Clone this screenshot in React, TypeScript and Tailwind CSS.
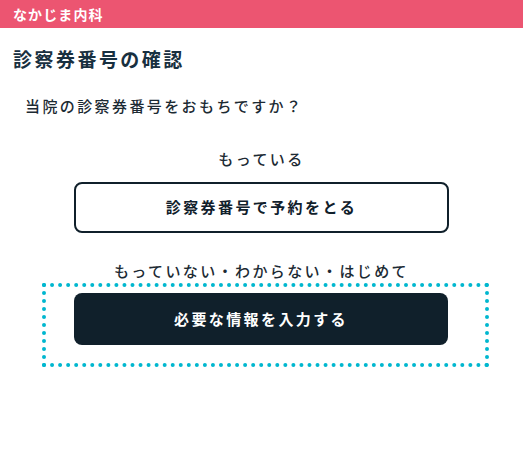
export default function App() {
  const font = { fontFamily: '"Noto Sans CJK JP", "Noto Sans", sans-serif' };
  return (
    <div className="w-[523px] h-[452px] bg-white text-[#1c2a33]" style={font}>
      <header className="h-[28px] bg-[#ec5571] px-[13px] pt-[1px]">
        <span className="text-[14px] leading-[20px] font-bold tracking-[0.08em] text-white">なかじま内科</span>
      </header>

      <h1 className="mt-[17px] px-[13px] text-[19px] leading-[28px] font-bold tracking-[0.13em] text-[#183040]">
        診察券番号の確認
      </h1>

      <p className="mt-[21px] px-[25px] text-[15px] leading-[24px] font-medium tracking-[0.16em]">
        当院の診察券番号をおもちですか？
      </p>

      <p className="mt-[29px] text-center text-[15px] leading-[24px] font-medium tracking-[0.16em]">もっている</p>
      <button className="mt-[11px] mx-auto flex h-[51px] w-[375px] items-center justify-center rounded-[8px] border-2 border-[#10202b] bg-white text-[15px] font-bold tracking-[0.16em] text-[#10202b]">
        診察券番号で予約をとる
      </button>

      <p className="mt-[26px] text-center text-[15px] leading-[24px] font-medium tracking-[0.16em]">
        もっていない・わからない・はじめて
      </p>
      <div className="ml-[42px] h-[84px] w-[447px] border-4 border-dotted border-[#00b7cf]">
        <button className="ml-[28px] mt-[6px] flex h-[52px] w-[374px] items-center justify-center rounded-[8px] bg-[#10202b] text-[15px] font-bold tracking-[0.16em] text-white">
          必要な情報を入力する
        </button>
      </div>
    </div>
  );
}
